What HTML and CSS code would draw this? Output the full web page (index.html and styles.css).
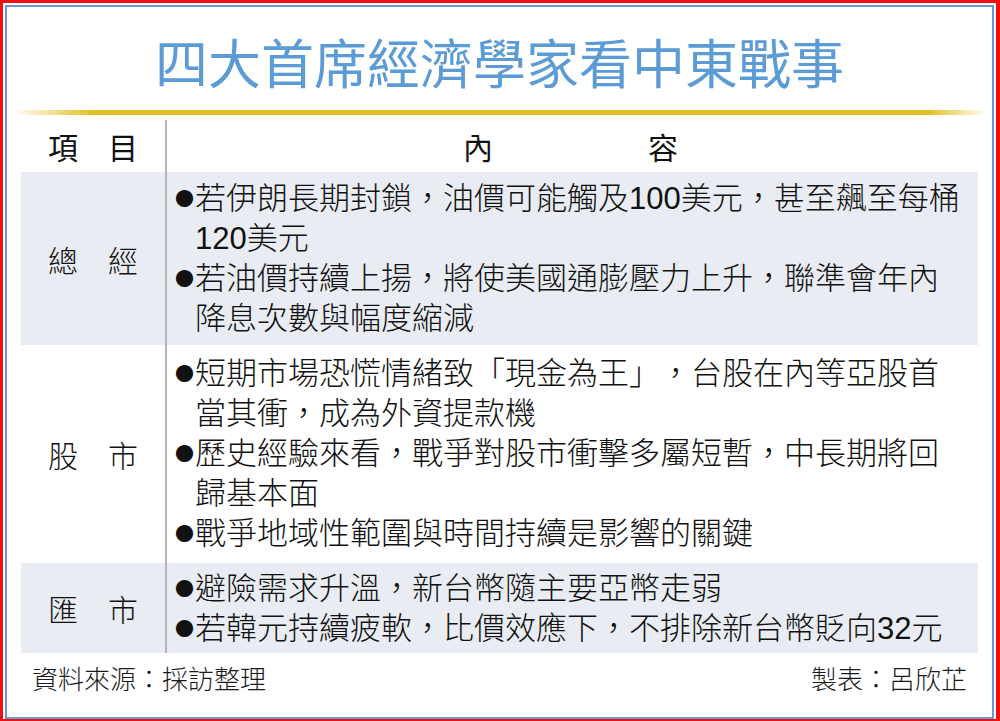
FILE: index.html
```html
<!DOCTYPE html>
<html lang="zh-Hant">
<head>
<meta charset="utf-8">
<title>四大首席經濟學家看中東戰事</title>
<link rel="stylesheet" href="styles.css">
</head>
<body>
<div class="frame">
  <div class="panel">
    <h1 class="title">四大首席經濟學家看中東戰事</h1>
    <div class="goldline"></div>
    <div class="table">
      <div class="row head">
        <div class="label"><span>項</span><span>目</span></div>
        <div class="content head-content"><span>內</span><span>容</span></div>
      </div>
      <div class="row shaded r1">
        <div class="label"><span>總</span><span>經</span></div>
        <div class="content">
          <p class="item"><span class="dot">●</span>若伊朗長期封鎖，油價可能觸及100美元，甚至飆至每桶120美元</p>
          <p class="item"><span class="dot">●</span>若油價持續上揚，將使美國通膨壓力上升，聯準會年內降息次數與幅度縮減</p>
        </div>
      </div>
      <div class="row r2">
        <div class="label"><span>股</span><span>市</span></div>
        <div class="content">
          <p class="item"><span class="dot">●</span>短期市場恐慌情緒致「現金為王」，台股在內等亞股首當其衝，成為外資提款機</p>
          <p class="item"><span class="dot">●</span>歷史經驗來看，戰爭對股市衝擊多屬短暫，中長期將回歸基本面</p>
          <p class="item"><span class="dot">●</span>戰爭地域性範圍與時間持續是影響的關鍵</p>
        </div>
      </div>
      <div class="row shaded r3">
        <div class="label"><span>匯</span><span>市</span></div>
        <div class="content">
          <p class="item"><span class="dot">●</span>避險需求升溫，新台幣隨主要亞幣走弱</p>
          <p class="item"><span class="dot">●</span>若韓元持續疲軟，比價效應下，不排除新台幣貶向32元</p>
        </div>
      </div>
    </div>
    <div class="footer">
      <span>資料來源：採訪整理</span>
      <span>製表：呂欣芷</span>
    </div>
  </div>
</div>
</body>
</html>
```
FILE: styles.css
```css
html, body {
  margin: 0;
  padding: 0;
  background: #ffffff;
}
body {
  font-family: "Liberation Sans", "Noto Sans CJK TC", sans-serif;
  color: #111;
  text-spacing-trim: space-all;
}
.frame {
  width: 1000px;
  height: 721px;
  box-sizing: border-box;
  border-style: solid;
  border-color: #f01010;
  border-width: 3px 4px 2px 3px;
  padding: 2px 2px 0 2px;
  background: #fff;
}
.panel {
  height: 100%;
  box-sizing: border-box;
  border: 2px solid #6a9bd0;
  display: flex;
  flex-direction: column;
}
.title {
  margin: 28px 0 0 0;
  font-family: "Noto Sans CJK TC", sans-serif;
  font-weight: 400;
  font-size: 53px;
  line-height: 53px;
  text-align: center;
  color: #5b9bd6;
}
.goldline {
  margin: 22px 5px 0 6px;
  height: 5px;
  background: linear-gradient(to right,
    rgba(230,194,30,0) 0px,
    #e3c020 80px,
    #e3c020 915px,
    rgba(230,194,30,0) 974px);
}
.table {
  margin: 5px 14px 0 14px;
  display: flex;
  flex-direction: column;
}
.row {
  display: flex;
}
.shaded {
  background: #e9edf3;
}
.label {
  width: 144px;
  flex: none;
  display: flex;
  justify-content: center;
  align-items: center;
  gap: 30px;
  font-family: "Noto Sans CJK TC", sans-serif;
  font-weight: 300;
  font-size: 30px;
  line-height: 30px;
}
.content {
  flex: 1;
  border-left: 2px solid #b4b4b4;
  padding: 0 12px 0 8px;
  font-weight: 300;
}
.head {
  height: 52px;
}
.head .label {
  font-weight: 400;
}
.head-content {
  display: flex;
  justify-content: center;
  align-items: center;
  gap: 155px;
  font-family: "Noto Sans CJK TC", sans-serif;
  font-weight: 400;
  font-size: 30px;
  line-height: 30px;
}
.item {
  margin: 0;
  font-size: 31px;
  line-height: 40px;
  padding-left: 20px;
  text-indent: -20px;
}
.dot {
  display: inline-block;
  width: 20px;
  text-indent: 0;
  font-size: 19px;
  line-height: 19px;
  font-family: "Noto Sans CJK TC", sans-serif;
  vertical-align: 3px;
}
.r1 .content {
  padding-top: 7px;
  padding-bottom: 6px;
}
.r2 .content {
  padding-top: 9px;
  padding-bottom: 9px;
}
.r3 .content {
  padding-top: 6px;
  padding-bottom: 4px;
}
.footer {
  margin: 12px 25px 0 25px;
  display: flex;
  justify-content: space-between;
  font-family: "Noto Sans CJK TC", sans-serif;
  font-weight: 300;
  font-size: 26px;
  line-height: 26px;
  color: #1a1a1a;
}
```
